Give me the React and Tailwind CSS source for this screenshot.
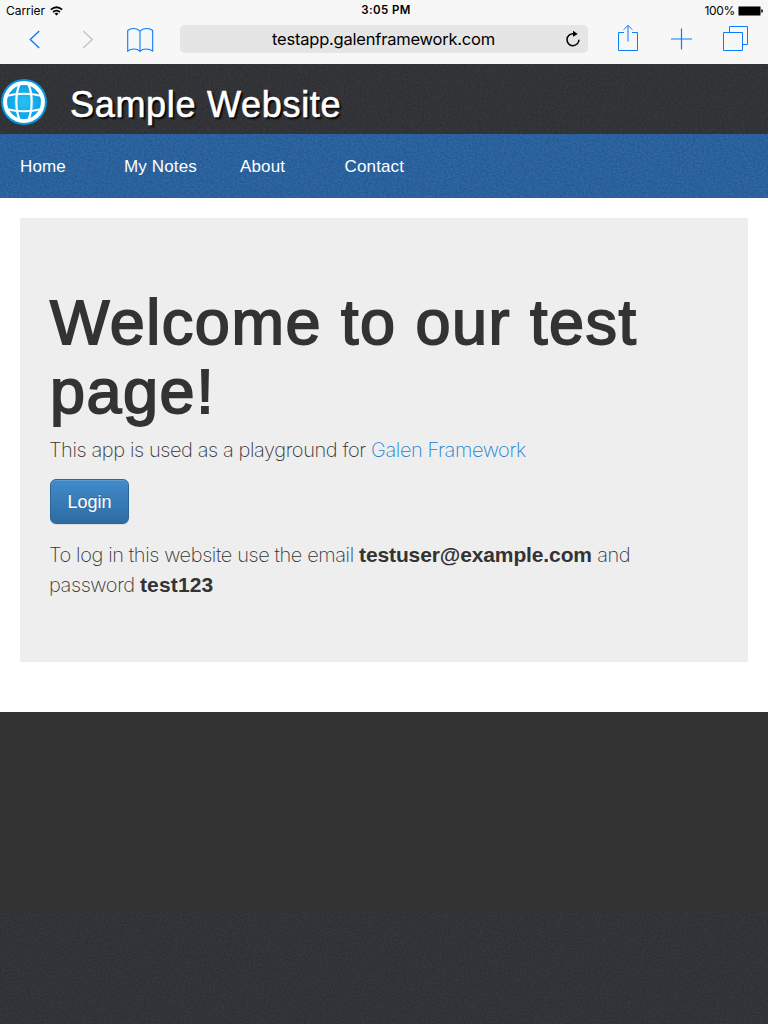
import React from "react";

const navItems = [
  { label: "Home", cell: "w-[104px]" },
  { label: "My Notes", cell: "w-[116px]" },
  { label: "About", cell: "w-[104.5px]" },
  { label: "Contact", cell: "w-[100px]" },
];

function Grain({ id, strength, seed }) {
  return (
    <svg className="pointer-events-none absolute inset-0 h-full w-full" aria-hidden="true">
      <filter id={id} x="0" y="0" width="100%" height="100%">
        <feTurbulence type="fractalNoise" baseFrequency="0.45 0.55" numOctaves="2" seed={seed} />
        <feColorMatrix values={`0 0 0 0 0  0 0 0 0 0  0 0 0 0 0  ${strength} 0 0 0 ${-strength * 0.3}`} />
      </filter>
      <rect width="100%" height="100%" filter={`url(#${id})`} />
    </svg>
  );
}

function StatusBar() {
  return (
    <div className="flex h-5 items-center justify-between pl-1.5 pr-[5px] pt-px text-black">
      <div className="flex w-[200px] items-center gap-[5px] text-[12px] tracking-[-0.05px]">
        Carrier
        <svg width="13" height="10" viewBox="0 0 13 10" fill="none" stroke="#000" strokeWidth="1.7">
          <path d="M.8 3.7Q6.5-1.2 12.2 3.7M3 6Q6.5 3.1 10 6" />
          <path d="M4.5 7.5Q6.5 6 8.5 7.5L6.5 9.6Z" fill="#000" stroke="none" />
        </svg>
      </div>
      <div className="pl-[3px] pt-px text-[11.5px] font-semibold tracking-[0.42px]">3:05 PM</div>
      <div className="flex w-[200px] items-center justify-end gap-[3px] text-[12px] tracking-[-0.3px]">
        100%
        <svg width="25" height="10" viewBox="0 0 25 10">
          <rect x=".5" y=".5" width="22" height="9" rx="1" fill="#000" stroke="#777" />
          <path d="M23.3 3.2h.7l.8.8v2l-.8.8h-.7z" fill="#000" />
        </svg>
      </div>
    </div>
  );
}

function Toolbar() {
  return (
    <div className="flex h-[43px] text-[#0a7cff]">
      <svg width="180" height="43" viewBox="0 0 180 43" fill="none" stroke="currentColor">
        <path d="M39.2 11L30.3 19.6L39.2 28" strokeWidth="1.4" />
        <path d="M83.2 11L92.2 19.6L83.2 28" stroke="#c4c4c4" strokeWidth="1.4" />
        <path
          d="M140 11.2C137 8 131 7.500 127.700 10.500V31C131 28.500 137 28.200 140 31.300C143 28.200 149 28.500 152.700 31V10.500C149 7.500 143 8 140 11.200V31.500"
          strokeWidth="1.100"
        />
      </svg>
      <div className="mt-[5px] flex h-[28px] w-[408px] items-center justify-end rounded-[5px] bg-[#e5e5e5] pr-[7px] text-black">
        <span className="flex-1 pl-[22px] text-center text-[16.5px] leading-none tracking-[-0.22px]">
          testapp.galenframework.com
        </span>
        <svg width="16" height="18" viewBox="0 0 16 18" fill="none" stroke="#000" strokeWidth="1.500">
          <path d="M8.600 3.700A6 6 0 1 0 14 9.800" />
          <path d="M8 .8L12.700 3.900L8 6.800Z" fill="#000" stroke="none" />
        </svg>
      </div>
      <svg width="180" height="43" viewBox="0 0 180 43" fill="none" stroke="currentColor">
        <path d="M36 12.500H30.500V30.500H49.500V12.500H44" />
        <path d="M40 21.500V5.500M35.700 9.700L40 5.300L44.300 9.700" />
        <path d="M83 19H104M93.500 8.500V29.500" strokeWidth="1.200" />
        <path d="M135.500 12.500H154.500V30.500H135.500ZM141.500 12V6.500H159.500V24.500H155" />
      </svg>
    </div>
  );
}

function Globe() {
  return (
    <svg width="46" height="46" viewBox="0 0 46 46" className="shrink-0">
      <defs>
        <radialGradient id="globeFill">
          <stop offset="0" stopColor="#27c2f5" />
          <stop offset="1" stopColor="#0597df" />
        </radialGradient>
      </defs>
      <circle cx="23" cy="23" r="23" fill="url(#globeFill)" />
      <g fill="none" stroke="#fff">
        <circle cx="23" cy="23" r="18.900" strokeWidth="4" />
        <g strokeWidth="2.200">
          <path d="M18.500 5C14.300 16 14.300 30 18.500 41M27.500 5C31.700 16 31.700 30 27.500 41" />
          <path d="M5 17Q23 12.500 41 17M5 30Q23 34.500 41 30" />
        </g>
      </g>
    </svg>
  );
}

export default function App() {
  return (
    <div className="flex h-[1024px] w-[768px] flex-col overflow-hidden bg-white font-['Liberation_Sans',Arial,sans-serif] text-[#333]">
      <header className="h-16 shrink-0 bg-[#f7f7f7] font-[Inter,sans-serif]">
        <StatusBar />
        <Toolbar />
      </header>

      <div className="relative flex h-[70px] shrink-0 items-start bg-[#36373b] pl-px pt-[15px]">
        <Grain id="grain-header" strength={0.32} seed={3} />
        <div className="relative flex">
          <Globe />
          <div className="pl-[23px] pt-[6px] text-[36px] leading-[40px] tracking-[0.7px] text-white [-webkit-text-stroke:0.6px_white] [text-shadow:2px_2px_2px_#000]">
            Sample Website
          </div>
        </div>
      </div>

      <nav className="relative h-16 shrink-0 bg-[#2d68a7]">
        <Grain id="grain-nav" strength={0.32} seed={8} />
        <ul className="relative flex h-full items-center pl-5 pt-[2px] text-[17px] tracking-[0.15px] text-white">
          {navItems.map((item) => (
            <li key={item.label} className={item.cell}>
              {item.label}
            </li>
          ))}
        </ul>
      </nav>

      <main className="h-[514px] shrink-0 px-5 pt-5">
        <section className="h-[444px] bg-[#eee] px-[30px] pt-[70px]">
          <h1 className="whitespace-nowrap text-[63px] leading-[69.3px] tracking-[1.5px] [-webkit-text-stroke:1.8px_#333]">
            Welcome to our test
            <br />
            page!
          </h1>
          <p className="-ml-px mt-[8px] whitespace-nowrap font-[Inter,sans-serif] text-[20px] font-extralight leading-[30px] tracking-[-0.4px]">
            This app is used as a playground for <a className="text-[#2181d0]">Galen Framework</a>
          </p>
          <button className="mt-[14px] flex h-[45px] w-[79px] items-center justify-center rounded-[6px] border border-[#2b669a] bg-linear-to-b from-[#428bca] to-[#2d6ca2] pt-[2px] text-[18px] text-white shadow-[inset_0_1px_0_rgba(255,255,255,0.15),0_1px_1px_rgba(0,0,0,0.075)] [text-shadow:0_-1px_0_rgba(0,0,0,0.2)]">
            Login
          </button>
          <p className="-ml-px mt-[16px] whitespace-nowrap font-[Inter,sans-serif] text-[20px] font-extralight leading-[30px] tracking-[-0.4px]">
            To log in this website use the email{" "}
            <b className="font-['Liberation_Sans',Arial,sans-serif] text-[21px] font-bold tracking-[-0.12px]">testuser@example.com</b> and
            <br />
            password <b className="font-['Liberation_Sans',Arial,sans-serif] text-[21px] font-bold tracking-[0.15px]">test123</b>
          </p>
        </section>
      </main>

      <footer className="h-[200px] shrink-0 bg-[#333]" />
      <div className="relative flex-1 bg-[#36373c]">
        <Grain id="grain-bottom" strength={0.32} seed={5} />
      </div>
    </div>
  );
}
